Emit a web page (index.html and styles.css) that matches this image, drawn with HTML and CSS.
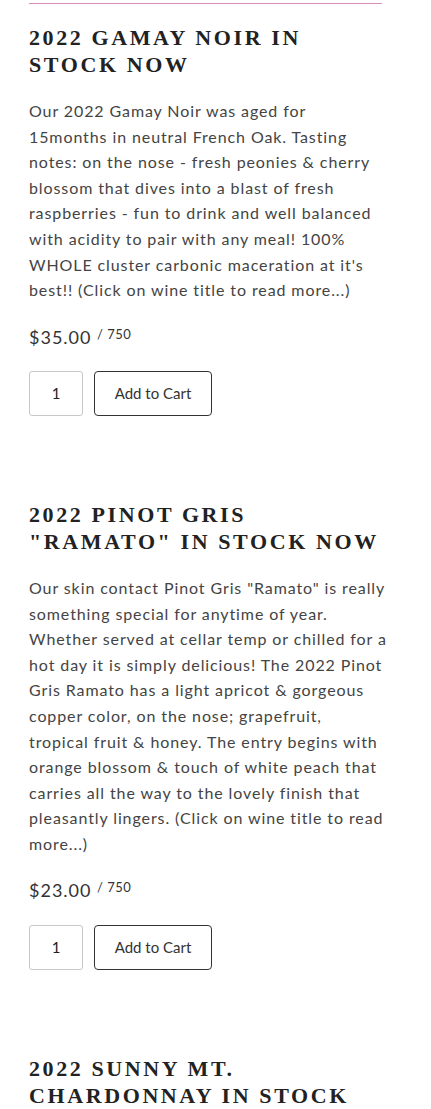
FILE: index.html
```html
<!DOCTYPE html>
<html lang="en">
<head>
    <meta charset="UTF-8">
    <meta name="viewport" content="width=device-width, initial-scale=1.0">
    <title>Wines</title>
    <link rel="stylesheet" href="styles.css">
</head>
<body>
    <div class="product-list">
        <hr class="divider">

        <!-- Gamay Noir -->
        <div class="product">
            <h2 class="product-title">2022 Gamay Noir in Stock Now</h2>
            <p class="product-desc">Our 2022 Gamay Noir was aged for<br>
                15months in neutral French Oak. Tasting<br>
                notes: on the nose - fresh peonies &amp; cherry<br>
                blossom that dives into a blast of fresh<br>
                raspberries - fun to drink and well balanced<br>
                with acidity to pair with any meal! 100%<br>
                WHOLE cluster carbonic maceration at it's<br>
                best!! (Click on wine title to read more...)</p>
            <div class="product-price">$35.00 <span class="unit">/ 750</span></div>
            <form class="cart-form">
                <input type="text" class="qty" value="1">
                <button type="button" class="add-btn">Add to Cart</button>
            </form>
        </div>

        <!-- Pinot Gris Ramato -->
        <div class="product">
            <h2 class="product-title">2022 Pinot Gris "Ramato" in Stock Now</h2>
            <p class="product-desc">Our skin contact Pinot Gris "Ramato" is really<br>
                something special for anytime of year.<br>
                Whether served at cellar temp or chilled for a<br>
                hot day it is simply delicious! The 2022 Pinot<br>
                Gris Ramato has a light apricot &amp; gorgeous<br>
                copper color, on the nose; grapefruit,<br>
                tropical fruit &amp; honey. The entry begins with<br>
                orange blossom &amp; touch of white peach that<br>
                carries all the way to the lovely finish that<br>
                pleasantly lingers. (Click on wine title to read<br>
                more...)</p>
            <div class="product-price">$23.00 <span class="unit">/ 750</span></div>
            <form class="cart-form">
                <input type="text" class="qty" value="1">
                <button type="button" class="add-btn">Add to Cart</button>
            </form>
        </div>

        <!-- Sunny Mt. Chardonnay -->
        <div class="product">
            <h2 class="product-title">2022 Sunny Mt. Chardonnay in Stock Now</h2>
        </div>
    </div>
</body>
</html>
```

FILE: styles.css
```css
* {
    margin: 0;
    padding: 0;
    box-sizing: border-box;
}
body {
    font-family: Lato, "Open Sans", sans-serif;
    background-color: #fff;
    color: #444;
}
.product-list {
    width: 353px;
    margin-left: 29px;
    padding-top: 3px;
}
.divider {
    border: none;
    border-top: 1px solid #d98cbc;
    margin-bottom: 20px;
}
.product {
    margin-bottom: 85px;
}
.product-title {
    font-family: "Liberation Serif", "Times New Roman", serif;
    font-weight: bold;
    font-size: 22px;
    line-height: 27px;
    letter-spacing: 2.6px;
    text-transform: uppercase;
    color: #222;
}
.product-desc {
    margin-top: 20px;
    font-size: 16px;
    line-height: 25.6px;
    letter-spacing: 0.9px;
    white-space: nowrap;
}
.product-price {
    margin-top: 19px;
    font-size: 18px;
    line-height: 25.2px;
    letter-spacing: 1px;
    color: #333;
}
.product-price .unit {
    font-size: 13px;
    vertical-align: 5px;
    letter-spacing: 0.5px;
}
.cart-form {
    display: flex;
    gap: 11px;
    margin-top: 21px;
}
.qty {
    width: 54px;
    height: 45px;
    border: 1px solid #c8c8c8;
    border-radius: 3px;
    text-align: center;
    font-family: inherit;
    font-size: 15px;
    color: #222;
}
.add-btn {
    width: 118px;
    height: 45px;
    border: 1px solid #333;
    border-radius: 4px;
    background: #fff;
    font-family: inherit;
    font-size: 15px;
    color: #333;
    cursor: pointer;
}
.add-btn:hover {
    background-color: #f5f5f5;
}
```
